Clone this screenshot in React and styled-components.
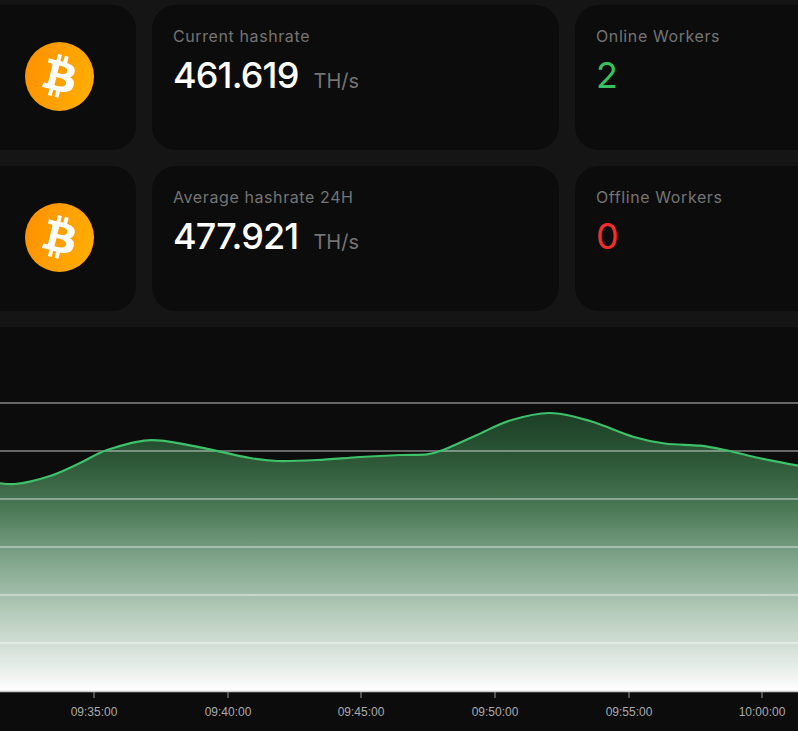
import styled, { createGlobalStyle } from 'styled-components'

const GlobalStyle = createGlobalStyle`
    html, body {
        margin: 0;
        padding: 0;
        background: #151515;
    }
`

const rows = [
    { label: 'Current hashrate', value: '461.619', workersLabel: 'Online Workers', workers: 2, workersColor: '#37c15f' },
    { label: 'Average hashrate 24H', value: '477.921', workersLabel: 'Offline Workers', workers: 0, workersColor: '#f52d2d' },
]

const curve = [
    [-15, 481], [15, 484], [50, 476], [80, 463], [107, 450], [148, 440.3], [190, 445.3],
    [250, 458], [277, 461], [317, 460], [360, 457], [400, 455], [427, 454.3], [443, 450], [477, 435],
    [510, 420.5], [550, 413], [590, 421], [633, 436.7], [665, 443.5],
    [700, 445.7], [725, 450], [750, 456], [777, 461.7], [798, 465.7], [815, 468],
]

const gridLines = [403, 451, 499, 547, 595, 643]
const ticks = [
    [94, '09:35:00'], [228, '09:40:00'], [361, '09:45:00'],
    [495, '09:50:00'], [629, '09:55:00'], [762, '10:00:00'],
]

const fillStops = [
    [0, '#1c3f26'], [0.176, '#2e5838'], [0.349, '#4c7a57'], [0.529, '#80a58b'],
    [0.745, '#bcd0c1'], [0.888, '#e0e8e2'], [1, '#ffffff'],
]

// catmull-rom through the points, gives the same soft look as the chart lib
const smoothPath = (pts) => {
    let d = `M${pts[0][0]} ${pts[0][1]}`
    for (let i = 0; i < pts.length - 1; i++) {
        const p0 = pts[i - 1] || pts[i]
        const p1 = pts[i]
        const p2 = pts[i + 1]
        const p3 = pts[i + 2] || p2
        const c1 = [p1[0] + (p2[0] - p0[0]) / 6, p1[1] + (p2[1] - p0[1]) / 6]
        const c2 = [p2[0] - (p3[0] - p1[0]) / 6, p2[1] - (p3[1] - p1[1]) / 6]
        d += ` C${c1[0]} ${c1[1]} ${c2[0]} ${c2[1]} ${p2[0]} ${p2[1]}`
    }
    return d
}

const BitcoinIcon = ({ id }) => (
    <CoinSvg viewBox="0 0 64 64">
        <defs>
            <linearGradient id={id} x1="0" y1="0.35" x2="1" y2="0.65">
                <stop offset="0" stopColor="#ff9200" />
                <stop offset="1" stopColor="#ffae00" />
            </linearGradient>
        </defs>
        <circle cx="32" cy="32" r="32" fill={`url(#${id})`} />
        <path
            fill="#ffffff"
            d="M46.103 27.444c.637-4.258-2.605-6.547-7.038-8.074l1.438-5.768-3.511-.875-1.4 5.616c-.923-.23-1.871-.447-2.813-.662l1.41-5.653-3.509-.875-1.439 5.766c-.764-.174-1.514-.346-2.242-.527l.004-.018-4.842-1.209-.934 3.75s2.605.597 2.55.634c1.422.355 1.679 1.296 1.636 2.042l-1.638 6.571c.098.025.225.061.365.117l-.371-.092-2.296 9.205c-.174.432-.615 1.08-1.609.834.035.051-2.552-.637-2.552-.637l-1.743 4.019 4.569 1.139c.85.213 1.683.436 2.503.646l-1.453 5.834 3.507.875 1.439-5.772c.958.26 1.888.5 2.798.726l-1.434 5.745 3.511.875 1.453-5.823c5.987 1.133 10.489.676 12.384-4.739 1.527-4.36-.076-6.875-3.226-8.515 2.294-.529 4.022-2.038 4.483-5.155zM38.08 38.693c-1.085 4.36-8.426 2.003-10.806 1.412l1.928-7.729c2.38.594 10.012 1.77 8.878 6.317zm1.086-11.312c-.99 3.966-7.1 1.951-9.082 1.457l1.748-7.01c1.982.494 8.365 1.416 7.334 5.553z"
        />
    </CoinSvg>
)

const Chart = () => {
    const line = smoothPath(curve)
    return (
        <ChartSvg viewBox="0 327 798 404">
            <defs>
                <linearGradient id="areaFill" gradientUnits="userSpaceOnUse" x1="0" y1="413" x2="0" y2="691">
                    {fillStops.map(([offset, color]) => (
                        <stop key={offset} offset={offset} stopColor={color} />
                    ))}
                </linearGradient>
            </defs>
            <path d={`${line} L815 691 L-15 691 Z`} fill="url(#areaFill)" />
            {gridLines.map((y) => (
                <line key={y} x1="0" x2="798" y1={y} y2={y} stroke="#ffffff" strokeOpacity="0.5" strokeWidth="1.5" />
            ))}
            <path d={line} fill="none" stroke="#3dc26a" strokeWidth="2.2" />
            <line x1="0" x2="798" y1="691.5" y2="691.5" stroke="#cccccc" strokeWidth="1.5" />
            {ticks.map(([x, time]) => (
                <g key={time}>
                    <line x1={x} x2={x} y1="692" y2="698" stroke="#999999" />
                    <AxisLabel x={x} y="716" textAnchor="middle">{time}</AxisLabel>
                </g>
            ))}
        </ChartSvg>
    )
}

const App = () => {
    return (
        <>
            <GlobalStyle />
            <Page>
                <CardGrid>
                    {rows.map((row, i) => (
                        <CardRow key={row.label}>
                            <CoinCard>
                                <BitcoinIcon id={`coinFill${i}`} />
                            </CoinCard>
                            <StatCard>
                                <StatLabel>{row.label}</StatLabel>
                                <StatValueRow>
                                    <StatValue>{row.value}</StatValue>
                                    <StatUnit>TH/s</StatUnit>
                                </StatValueRow>
                            </StatCard>
                            <StatCard>
                                <StatLabel>{row.workersLabel}</StatLabel>
                                <StatValueRow>
                                    <WorkerCount $color={row.workersColor}>{row.workers}</WorkerCount>
                                </StatValueRow>
                            </StatCard>
                        </CardRow>
                    ))}
                </CardGrid>
                <ChartPanel>
                    <Chart />
                </ChartPanel>
            </Page>
        </>
    )
}

export default App

const Page = styled.div`
    width: 798px;
    height: 731px;
    overflow: hidden;
    display: flex;
    flex-direction: column;
    gap: 16px;
    padding-top: 5px;
    box-sizing: border-box;
    background: #151515;
    font-family: Inter, 'Open Sans', sans-serif;
`
const CardGrid = styled.div`
    display: flex;
    flex-direction: column;
    gap: 16px;
    margin-left: -64px;
`
const CardRow = styled.div`
    display: grid;
    grid-template-columns: 200px 407px 300px;
    gap: 16px;
    height: 145px;
`
const CoinCard = styled.div`
    background: #0c0c0c;
    border-radius: 24px;
    display: flex;
    align-items: center;
    justify-content: flex-end;
    padding: 0 42px 2px 0;
`
const CoinSvg = styled.svg`
    display: block;
    width: 69px;
    height: 69px;
`
const StatCard = styled.div`
    background: #0c0c0c;
    border-radius: 24px;
    padding: 21px 21px;
`
const StatLabel = styled.div`
    font-size: 16px;
    line-height: 20px;
    color: #747474;
    letter-spacing: 0.6px;
`
const StatValueRow = styled.div`
    display: flex;
    align-items: baseline;
    gap: 15px;
    margin-top: 7px;
`
const StatValue = styled.span`
    font-size: 36px;
    line-height: 44px;
    font-weight: 500;
    letter-spacing: -0.85px;
    color: #ffffff;
`
const StatUnit = styled.span`
    font-size: 20px;
    color: #747474;
`
const WorkerCount = styled.span`
    font-size: 36px;
    line-height: 44px;
    color: ${(p) => p.$color};
`
const ChartPanel = styled.div`
    flex: 1;
    background: #0c0c0c;
`
const ChartSvg = styled.svg`
    display: block;
    width: 798px;
    height: 404px;
`
const AxisLabel = styled.text`
    font-family: 'Liberation Sans', Arial, sans-serif;
    font-size: 12px;
    fill: #aaaaaa;
`
